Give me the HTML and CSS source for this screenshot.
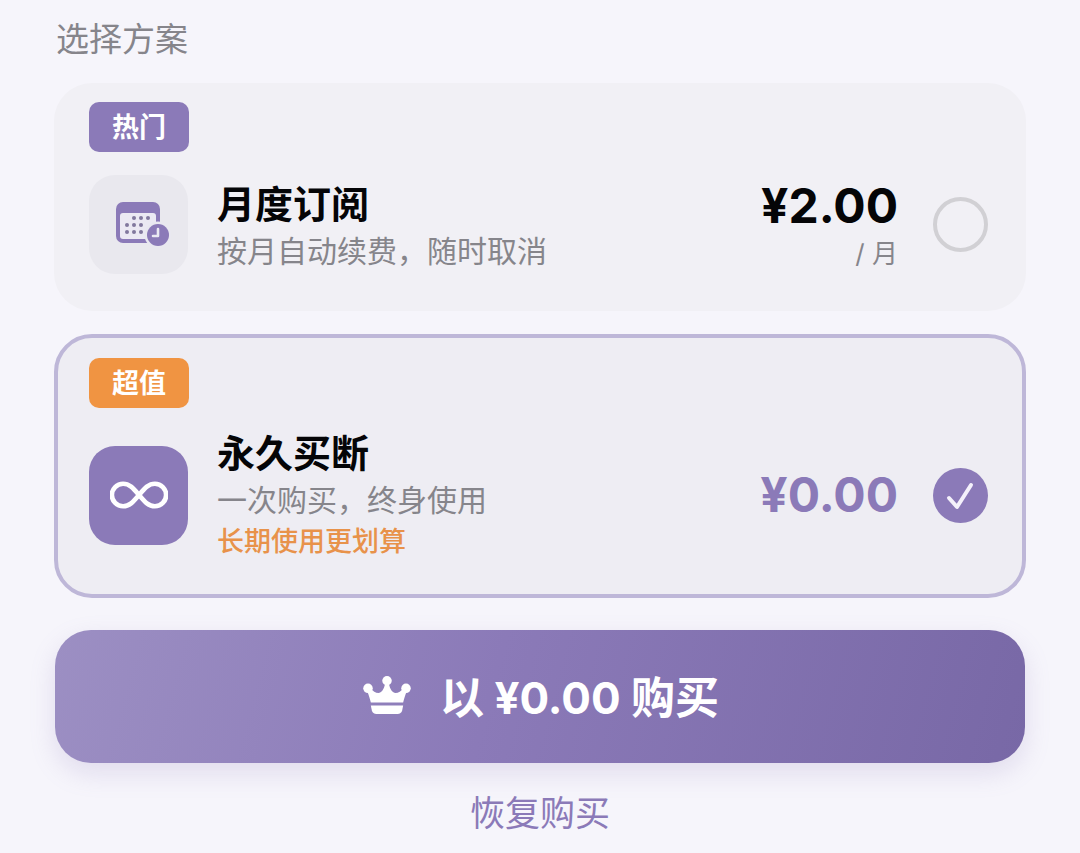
FILE: index.html
```
<!DOCTYPE html>
<html lang="zh-CN">
<head>
    <meta charset="UTF-8">
    <meta name="viewport" content="width=device-width, initial-scale=1.0">
    <title>选择方案</title>
    <link rel="stylesheet" href="styles.css">
</head>
<body>
<form class="paywall">
    <h1 class="heading" id="heading">选择方案</h1>

    <div class="plans" role="radiogroup" aria-labelledby="heading">
        <label class="plan plan-monthly">
            <span class="badge">热门</span>
            <span class="plan-row">
                <span class="plan-icon">
                    <svg width="65" height="52" viewBox="-8 0 65 52">
                        <rect x="2" y="3" width="44" height="41" rx="7" fill="#8b7ab8"/>
                        <rect x="6" y="14" width="36" height="26" rx="3" fill="#ebe9f3"/>
                        <g fill="#81789e">
                            <circle cx="20" cy="19" r="2"/>
                            <circle cx="27" cy="19" r="2"/>
                            <circle cx="34" cy="19" r="2"/>
                            <circle cx="13" cy="26" r="2"/>
                            <circle cx="20" cy="26" r="2"/>
                            <circle cx="27" cy="26" r="2"/>
                            <circle cx="13" cy="33" r="2"/>
                            <circle cx="20" cy="33" r="2"/>
                            <circle cx="27" cy="33" r="2"/>
                        </g>
                        <circle cx="44" cy="36" r="13.5" fill="#e9e8f0"/>
                        <circle cx="44" cy="36" r="11" fill="#8b7ab8"/>
                        <path d="M44 30v7h-5" fill="none" stroke="#ebe9f3" stroke-width="2.6" stroke-linecap="round" stroke-linejoin="round"/>
                    </svg>
                </span>
                <span class="plan-text">
                    <span class="plan-name">月度订阅</span>
                    <span class="plan-desc">按月自动续费，随时取消</span>
                </span>
                <span class="plan-price">
                    <span class="price">¥2.00</span>
                    <span class="period">/ 月</span>
                </span>
                <input class="plan-radio" type="radio" name="plan" value="monthly">
            </span>
        </label>

        <label class="plan plan-lifetime">
            <span class="badge">超值</span>
            <span class="plan-row">
                <span class="plan-icon">
                    <svg width="58" height="32" viewBox="0 0 62 34">
                        <path d="M31 17C25 10 21 5 14 5a12 12 0 0 0 0 24c7 0 11-5 17-12s10-12 17-12a12 12 0 0 1 0 24c-7 0-11-5-17-12z" fill="none" stroke="#fff" stroke-width="5" stroke-linejoin="round"/>
                    </svg>
                </span>
                <span class="plan-text">
                    <span class="plan-name">永久买断</span>
                    <span class="plan-desc">一次购买，终身使用</span>
                    <span class="plan-note">长期使用更划算</span>
                </span>
                <span class="plan-price">
                    <span class="price">¥0.00</span>
                </span>
                <input class="plan-radio" type="radio" name="plan" value="lifetime" checked>
            </span>
        </label>
    </div>

    <button class="buy" type="button">
        <svg width="52" height="38" viewBox="0 1 52 40" fill="#fff">
            <circle cx="26" cy="6" r="5"/>
            <circle cx="6" cy="14" r="5"/>
            <circle cx="46" cy="14" r="5"/>
            <path d="M24 9h4c1 6 4 10 7 10 3 0 6-2 8-5l4 3c-2 4-3 8-4 12H9C8 25 7 21 5 17l4-3c2 3 5 5 8 5 3 0 6-4 7-10z"/>
            <path d="M9 32h34l-1 5q-1 4-5 4H15q-4 0-5-4z"/>
        </svg>
        <span>以 ¥0.00 购买</span>
    </button>

    <a class="restore" href="#">恢复购买</a>
</form>
</body>
</html>
```
FILE: styles.css
```
* {
    box-sizing: border-box;
}

body {
    margin: 0;
    background-color: #f6f5fb;
    color: #050507;
    font-family: Inter, "Noto Sans CJK SC", sans-serif;
}

.paywall {
    display: flex;
    flex-direction: column;
    padding: 19px 54px 16px;
}

.heading {
    margin: 0 0 24px 2px;
    color: #86858b;
    font-size: 33px;
    font-weight: 400;
    line-height: 40px;
}

.plans {
    display: flex;
    flex-direction: column;
    gap: 23px;
}

.plan {
    display: flex;
    flex-direction: column;
    align-items: flex-start;
    gap: 23px;
    padding: 15px 34px 33px 31px;
    border: 4px solid transparent;
    border-radius: 38px;
    background-color: #f1f0f5;
    cursor: pointer;
}

.plan:has(:checked) {
    border-color: #beb7d8;
    background-color: #eeedf3;
}

.plan-lifetime {
    gap: 21px;
    padding-top: 20px;
}

.badge {
    padding: 2px 23px 0;
    border-radius: 10px;
    background-color: #8b7ab8;
    color: #fff;
    font-size: 27px;
    font-weight: 700;
    line-height: 48px;
}

.plan-lifetime .badge {
    background-color: #f09442;
}

.plan-row {
    display: flex;
    align-items: center;
    width: 100%;
}

.plan-icon {
    display: flex;
    align-items: center;
    justify-content: center;
    width: 99px;
    height: 99px;
    margin-right: 29px;
    border-radius: 26px;
    background-color: #e9e8ee;
}

.plan-lifetime .plan-icon {
    background-color: #8b7ab8;
}

.plan-text {
    display: flex;
    flex: 1;
    flex-direction: column;
}

.plan-monthly .plan-text {
    padding-top: 4px;
}

.plan-name {
    font-size: 38px;
    font-weight: 700;
    line-height: 48px;
}

.plan-desc {
    color: #86858b;
    font-size: 30px;
    line-height: 46px;
}

.plan-note {
    color: #e8924a;
    font-size: 27px;
    font-weight: 500;
    line-height: 38px;
}

.plan-price {
    display: flex;
    flex-direction: column;
    align-items: flex-end;
    margin-right: 35px;
}

.plan-monthly .plan-price {
    padding-top: 3px;
}

.price {
    font-size: 48px;
    font-weight: 700;
    line-height: 56px;
}

.plan-lifetime .price {
    color: #8b7ab8;
}

.period {
    color: #86858b;
    font-size: 26px;
    line-height: 40px;
}

.plan-radio {
    appearance: none;
    width: 55px;
    height: 55px;
    margin: 0;
    border: 4px solid #d1d0d4;
    border-radius: 50%;
    cursor: pointer;
}

.plan-radio:checked {
    border: 0;
    background: #8b7ab8 url("data:image/svg+xml,%3Csvg xmlns='http://www.w3.org/2000/svg' viewBox='0 0 55 55'%3E%3Cpath d='M16 30l8 9 14-22' fill='none' stroke='%23f4f1fb' stroke-width='4' stroke-linecap='round' stroke-linejoin='round'/%3E%3C/svg%3E") center / cover;
}

.buy {
    display: flex;
    align-items: center;
    justify-content: center;
    gap: 27px;
    height: 133px;
    margin: 32px 1px 0;
    padding: 0 0 4px;
    border: 0;
    border-radius: 36px;
    background-image: linear-gradient(105deg, #9c8fc3, #8b7ab8 45%, #7868a6);
    box-shadow: 0 10px 26px rgba(139, 122, 184, 0.2);
    color: #fff;
    font-family: inherit;
    font-size: 44px;
    font-weight: 700;
    cursor: pointer;
}

.restore {
    align-self: center;
    margin-top: 25px;
    color: #8b7ab8;
    font-size: 35px;
    line-height: 50px;
    text-decoration: none;
}
```
